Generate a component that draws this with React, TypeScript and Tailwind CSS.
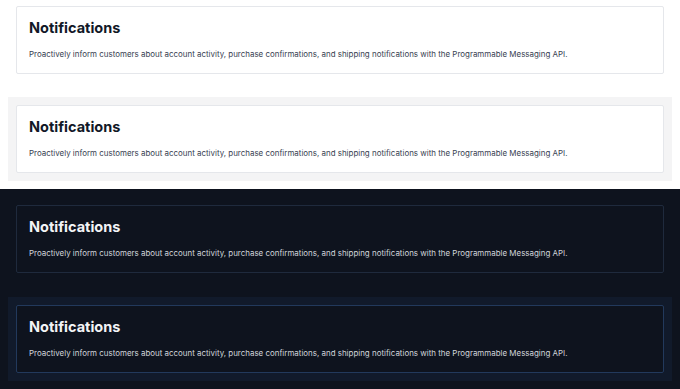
const font = { fontFamily: "Inter, 'Noto Sans', sans-serif" }

interface CardProps {
  dark?: boolean
  focused?: boolean
}

function NotificationCard({ dark, focused }: CardProps) {
  const card = (
    <div
      className={
        "h-[68px] rounded-[2px] border px-3 pt-[11px] " +
        (dark
          ? "bg-[#0e131e] " + (focused ? "border-[#22395c]" : "border-[#1f2a3d]")
          : "bg-white border-[#e5e7eb]")
      }
    >
      <h2
        className={
          "text-[14.5px] leading-[20px] font-bold " + (dark ? "text-[#f3f4f6]" : "text-[#111827]")
        }
      >
        Notifications
      </h2>
      <p
        className={
          "mt-[10px] text-[7.95px] leading-[12px] " + (dark ? "text-[#d1d5db]" : "text-[#374151]")
        }
      >
        Proactively inform customers about account activity, purchase confirmations, and shipping
        notifications with the Programmable Messaging API.
      </p>
    </div>
  )

  if (!focused) return card

  // focus halo around the card
  return (
    <div className={"-m-2 p-2 " + (dark ? "bg-[#111a2b]" : "bg-[#f4f4f5]")}>{card}</div>
  )
}

export default function App() {
  return (
    <div style={font} className="w-[680px] h-[389px] overflow-hidden">
      <div className="bg-white px-4 pt-[6px] pb-4 flex flex-col gap-[31px]">
        <NotificationCard />
        <NotificationCard focused />
      </div>
      <div className="bg-[#0e131e] px-4 pt-4 pb-4 flex flex-col gap-[32px]">
        <NotificationCard dark />
        <NotificationCard dark focused />
      </div>
    </div>
  )
}
